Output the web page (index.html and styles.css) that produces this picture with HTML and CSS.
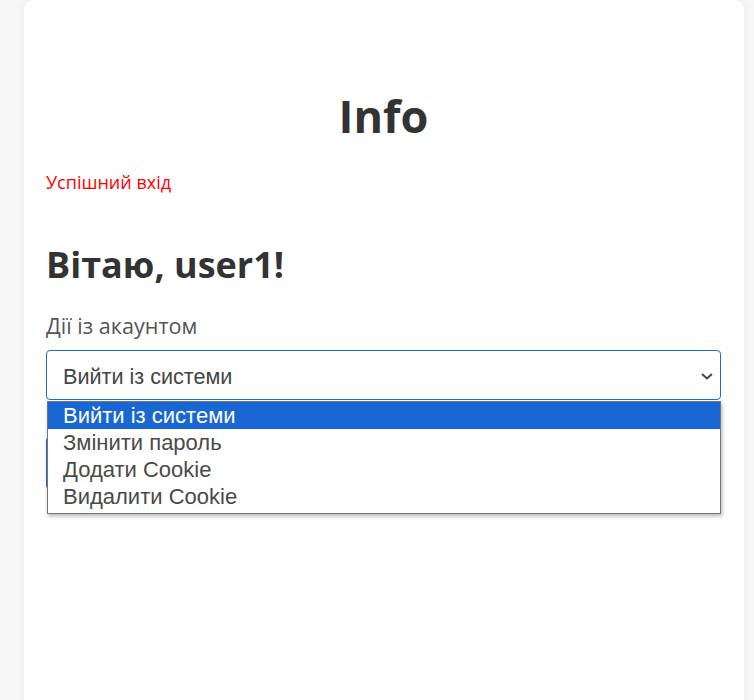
FILE: index.html
```html
<!DOCTYPE html>
<html lang="uk">
<head>
<meta charset="utf-8">
<title>Info</title>
<link rel="stylesheet" href="styles.css">
</head>
<body>
<main class="card">
  <h1 class="title">Info</h1>
  <p class="success">Успішний вхід</p>
  <h2 class="greeting">Вітаю, user1!</h2>
  <form class="form">
    <label class="label">Дії із акаунтом</label>
    <div class="select-wrap">
      <div class="select">
        <span class="select-value">Вийти із системи</span>
        <svg class="chevron" width="12" height="7" viewBox="0 0 12 7"><path d="M1 1 L6 5.5 L11 1" fill="none" stroke="#444" stroke-width="2"/></svg>
      </div>
      <ul class="dropdown">
        <li class="option selected">Вийти із системи</li>
        <li class="option">Змінити пароль</li>
        <li class="option">Додати Cookie</li>
        <li class="option">Видалити Cookie</li>
      </ul>
    </div>
    <button class="submit" type="button">Виконати</button>
  </form>
</main>
</body>
</html>
```
FILE: styles.css
```css
html, body {
  margin: 0;
  padding: 0;
  background: #f7f7f7;
  height: 100%;
  overflow: hidden;
}
body {
  font-family: "Open Sans", "Noto Sans", sans-serif;
  color: #333;
}
.card {
  margin-left: 24px;
  width: 720px;
  min-height: 760px;
  box-sizing: border-box;
  padding: 89px 23px 0 22px;
  background: #fff;
  border-radius: 10px;
  box-shadow: 0 0 10px rgba(0, 0, 0, 0.07);
}
.title {
  margin: 0;
  text-align: center;
  font-size: 45px;
  line-height: 54px;
  font-weight: 700;
  color: #333;
}
.success {
  margin: 27px 0 0;
  font-size: 18px;
  line-height: 24px;
  color: #ff0000;
}
.greeting {
  margin: 50px 0 0;
  font-size: 36px;
  line-height: 42px;
  font-weight: 700;
  color: #333;
}
.form {
  display: flex;
  flex-direction: column;
}
.label {
  margin-top: 27px;
  font-size: 21.6px;
  line-height: 26px;
  color: #555;
}
.select-wrap {
  position: relative;
  margin-top: 11px;
}
.select {
  height: 50px;
  box-sizing: border-box;
  border: 1px solid #1a6ed2;
  border-radius: 4px;
  padding: 3px 7px 0 16px;
  display: flex;
  align-items: center;
  justify-content: space-between;
  font-family: "Liberation Sans", Arial, sans-serif;
  font-size: 21.6px;
  color: #444;
}
.chevron {
  display: block;
}
.dropdown {
  position: absolute;
  top: 51px;
  left: 1px;
  right: 0;
  margin: 0;
  padding: 0 0 3px;
  list-style: none;
  background: #fff;
  border: 1px solid #767676;
  box-shadow: 1px 2px 4px rgba(0, 0, 0, 0.3);
  font-family: "Liberation Sans", Arial, sans-serif;
  font-size: 22px;
  line-height: 27px;
  color: #4a4a4a;
  z-index: 2;
}
.option {
  padding-left: 15px;
}
.option.selected {
  background: #1967d2;
  color: #fff;
}
.submit {
  margin-top: 37px;
  height: 52px;
  border: none;
  border-radius: 4px;
  background: #1a6ed2;
  color: #fff;
  font-family: "Open Sans", sans-serif;
  font-size: 20px;
}
```
